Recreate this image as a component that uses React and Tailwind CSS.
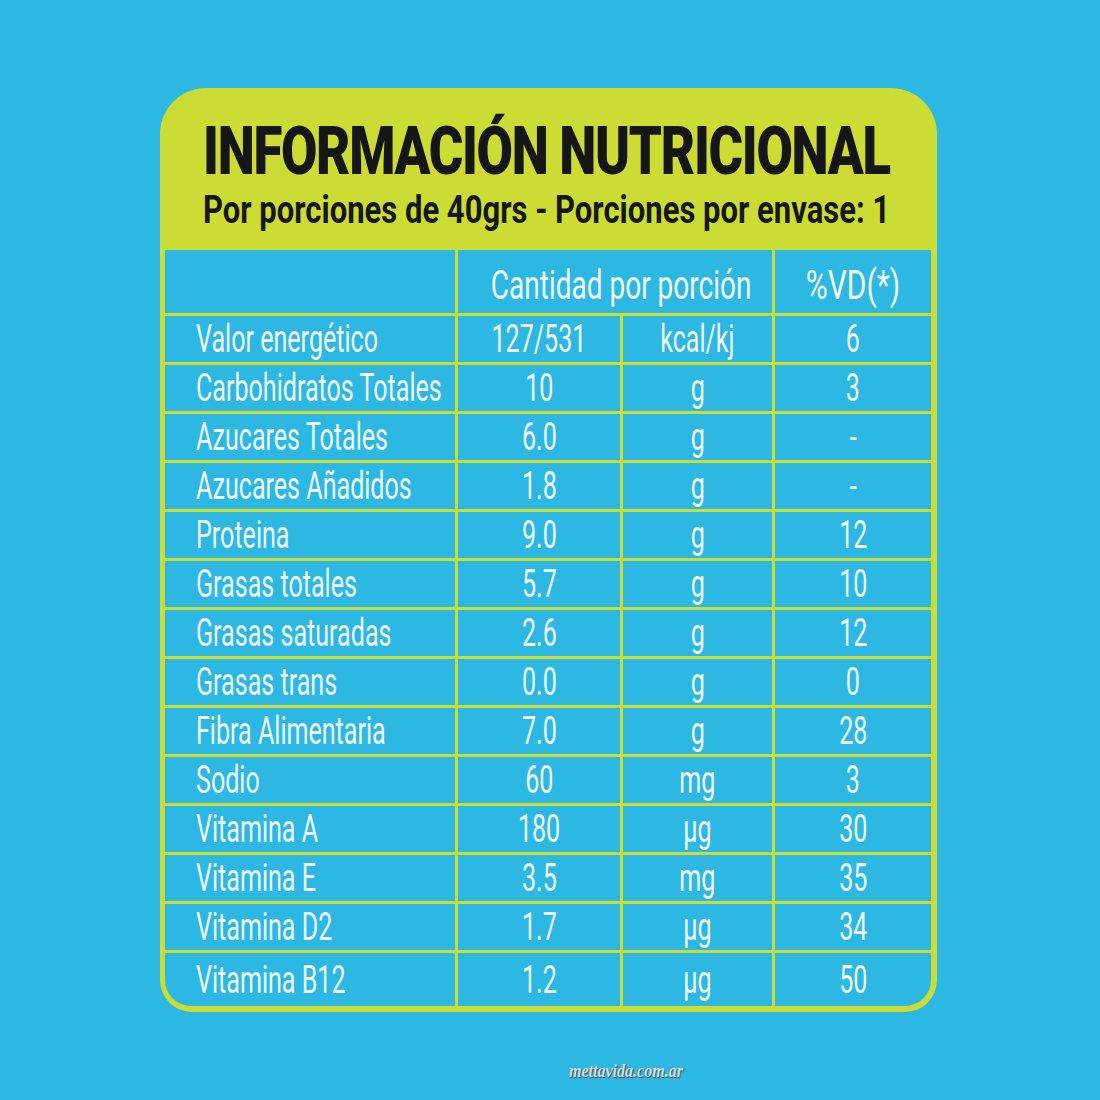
import React, { useLayoutEffect, useRef, useState } from "react";

// Stretches or squeezes a line of text horizontally to a given width
const FitText = ({ width, className, children }) => {
  const ref = useRef(null);
  const [scale, setScale] = useState(1);

  useLayoutEffect(() => {
    if (ref.current) {
      const natural = ref.current.offsetWidth;
      if (natural > 0) setScale(width / natural);
    }
  }, [width]);

  return (
    <div className="h-full overflow-visible whitespace-nowrap">
      <span
        ref={ref}
        className={"inline-block origin-left " + className}
        style={{ transform: `scaleX(${scale})` }}
      >
        {children}
      </span>
    </div>
  );
};

const rows = [
  ["Valor energético", "127/531", "kcal/kj", "6"],
  ["Carbohidratos Totales", "10", "g", "3"],
  ["Azucares Totales", "6.0", "g", "-"],
  ["Azucares Añadidos", "1.8", "g", "-"],
  ["Proteina", "9.0", "g", "12"],
  ["Grasas totales", "5.7", "g", "10"],
  ["Grasas saturadas", "2.6", "g", "12"],
  ["Grasas trans", "0.0", "g", "0"],
  ["Fibra Alimentaria", "7.0", "g", "28"],
  ["Sodio", "60", "mg", "3"],
  ["Vitamina A", "180", "µg", "30"],
  ["Vitamina E", "3.5", "mg", "35"],
  ["Vitamina D2", "1.7", "µg", "34"],
  ["Vitamina B12", "1.2", "µg", "50"],
];

const Cell = ({ children, left, className = "" }) => (
  <div
    className={
      "bg-[#2db7e3] flex items-center " +
      (left ? "justify-start pl-[31px] " : "justify-center ") +
      className
    }
  >
    <span
      className={
        "inline-block whitespace-nowrap scale-x-[0.66] text-[38px] leading-none text-[#eef7f9] " +
        (left ? "origin-left" : "origin-center")
      }
    >
      {children}
    </span>
  </div>
);

export default function App() {
  return (
    <div
      className="w-[1100px] h-[1100px] bg-[#2db7e3] pt-[88px] pl-[160px] flex flex-col"
      style={{ fontFamily: "Roboto, 'Noto Sans', sans-serif" }}
    >
      <div className="w-[777px] h-[924px] bg-[#cbdd35] rounded-t-[46px] rounded-b-[32px] pl-[5px] pr-[6px] pb-[6px] flex flex-col">
        {/* Heading */}
        <div className="h-[162px] pl-[38px] pt-[31px] flex flex-col text-[#161616]">
          <div className="h-[72px] shrink-0">
            <FitText width={687} className="text-[66px] font-black leading-none tracking-tight">
              INFORMACIÓN NUTRICIONAL
            </FitText>
          </div>
          <div className="h-[40px] shrink-0">
            <FitText width={687} className="text-[38px] font-bold leading-none">
              Por porciones de 40grs - Porciones por envase: 1
            </FitText>
          </div>
        </div>

        {/* Table */}
        <div className="flex-1 grid grid-cols-[290px_162px_149px_156px] grid-rows-[63px_repeat(13,46px)_1fr] gap-[3px] rounded-b-[26px] overflow-hidden">
          <Cell />
          <div className="col-span-2 bg-[#2db7e3] flex items-center justify-center pt-[8px] pl-[12px]">
            <span className="inline-block whitespace-nowrap scale-x-[0.70] text-[40px] leading-none text-[#eef7f9]">
              Cantidad por porción
            </span>
          </div>
          <div className="bg-[#2db7e3] flex items-center justify-center pt-[8px]">
            <span className="inline-block whitespace-nowrap scale-x-[0.75] text-[40px] leading-none text-[#eef7f9]">
              %VD(*)
            </span>
          </div>
          {rows.map(([name, qty, unit, vd]) => (
            <React.Fragment key={name}>
              <Cell left>{name}</Cell>
              <Cell>{qty}</Cell>
              <Cell>{unit}</Cell>
              <Cell>{vd}</Cell>
            </React.Fragment>
          ))}
        </div>
      </div>

      <div className="pl-[409px] pt-[46px]">
        <span
          className="italic font-bold text-[18px] text-[#d9dde0] inline-block scale-x-[0.89] origin-left [text-shadow:1px_1px_1px_#3d4a52]"
          style={{ fontFamily: "'Liberation Serif', serif" }}
        >
          mettavida.com.ar
        </span>
      </div>
    </div>
  );
}
